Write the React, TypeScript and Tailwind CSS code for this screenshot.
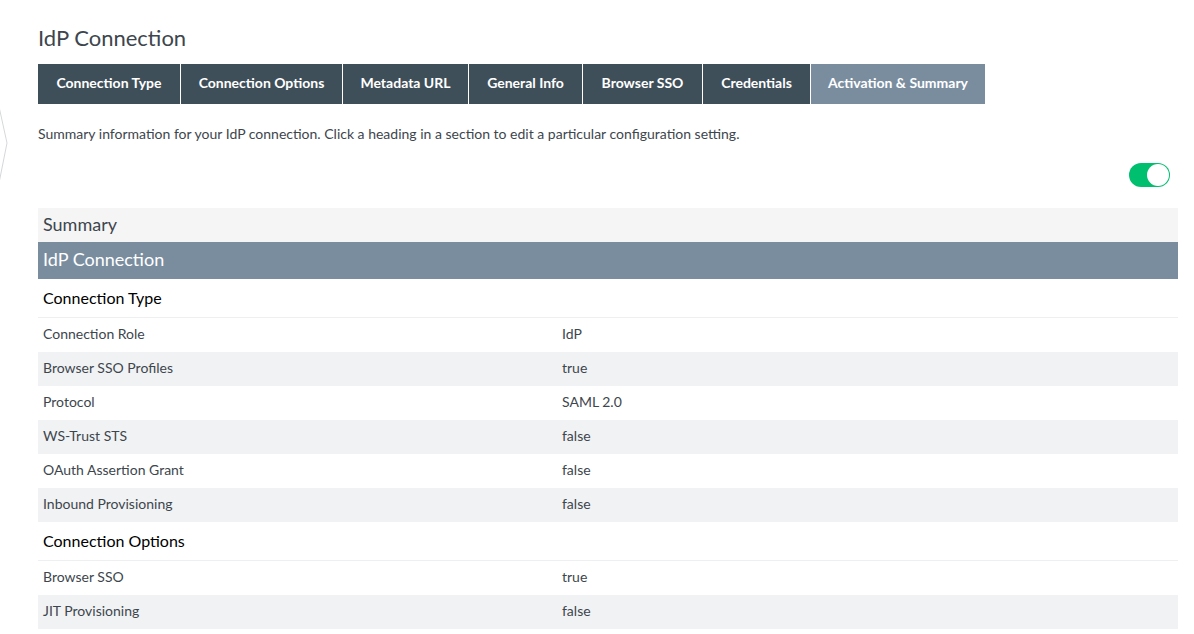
import React from "react";

const tabs = [
  { label: "Connection Type", w: "w-[142px]" },
  { label: "Connection Options", w: "w-[161px]" },
  { label: "Metadata URL", w: "w-[125px]" },
  { label: "General Info", w: "w-[113px]" },
  { label: "Browser SSO", w: "w-[119px]" },
  { label: "Credentials", w: "w-[107px]" },
  { label: "Activation & Summary", w: "w-[174px]", active: true },
];

type Row = { k: string; v: string };

const sections: { title: string; rows: Row[] }[] = [
  {
    title: "Connection Type",
    rows: [
      { k: "Connection Role", v: "IdP" },
      { k: "Browser SSO Profiles", v: "true" },
      { k: "Protocol", v: "SAML 2.0" },
      { k: "WS-Trust STS", v: "false" },
      { k: "OAuth Assertion Grant", v: "false" },
      { k: "Inbound Provisioning", v: "false" },
    ],
  },
  {
    title: "Connection Options",
    rows: [
      { k: "Browser SSO", v: "true" },
      { k: "JIT Provisioning", v: "false" },
      { k: "", v: "" },
    ],
  },
];

export default function App() {
  let idx = 0;
  return (
    <div
      className="relative w-[1194px] h-[634px] overflow-hidden bg-white text-[#333]"
      style={{ fontFamily: "Lato, 'Open Sans', sans-serif" }}
    >
      {/* collapsed sidebar arrow */}
      <svg className="absolute left-0 top-[100px]" width="14" height="90" viewBox="0 0 14 90">
        <path d="M-2 2 L7 43 L-2 88" fill="none" stroke="#d5d8da" strokeWidth="1" />
      </svg>

      <div className="pl-[38px] pr-[16px] pt-[24px]">
        <h1 className="text-[22px] leading-[28px] text-[#3d464d] font-normal">IdP Connection</h1>

        <div className="mt-[12px] flex gap-[1px]">
          {tabs.map((t) => (
            <div
              key={t.label}
              className={`${t.w} h-[40px] pb-[3px] flex items-center justify-center text-white text-[14px] font-bold ${
                t.active ? "bg-[#7a8d9f]" : "bg-[#3f4f5a]"
              }`}
            >
              {t.label}
            </div>
          ))}
        </div>

        <p className="mt-[22px] text-[14px] leading-[16px] text-[#3d464d]">
          Summary information for your IdP connection. Click a heading in a section to edit a particular
          configuration setting.
        </p>

        <div className="mt-[21px] flex justify-end pr-[8px]">
          <div className="relative w-[41px] h-[24px] rounded-full bg-[#00bf6f]">
            <div className="absolute right-[1px] top-[1px] w-[22px] h-[22px] rounded-full bg-white" />
          </div>
        </div>

        <div className="mt-[21px] w-[1140px]">
          <div className="h-[34px] pb-[2px] bg-[#f5f5f5] px-[5px] flex items-center text-[18px] text-[#3d464d]">Summary</div>
          <div className="h-[37px] pb-[2px] bg-[#7a8d9f] px-[5px] flex items-center text-[18px] text-white">IdP Connection</div>
          {sections.map((s) => (
            <div key={s.title}>
              <div className="h-[39px] pb-[1px] px-[5px] flex items-center text-[16px] text-black border-b border-[#eeeff0]">
                {s.title}
              </div>
              {s.rows.map((r, j) => {
                const i = idx++;
                return (
                  <div
                    key={s.title + j}
                    className={`h-[34px] pb-[3px] flex items-center text-[14px] text-[#3d464d] ${
                      i % 2 === 1 ? "bg-[#f1f2f4]" : "bg-white"
                    }`}
                  >
                    <div className="w-[519px] px-[5px]">{r.k}</div>
                    <div className="flex-1 px-[5px]">{r.v}</div>
                  </div>
                );
              })}
            </div>
          ))}
        </div>
      </div>
    </div>
  );
}
